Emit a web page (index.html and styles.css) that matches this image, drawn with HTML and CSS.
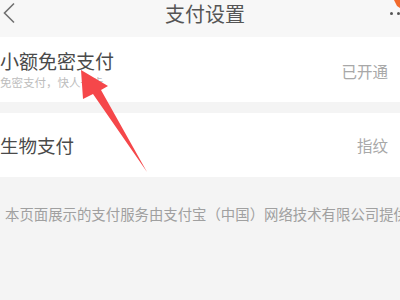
FILE: index.html
```html
<!DOCTYPE html>
<html lang="zh">
<head>
<meta charset="utf-8">
<link rel="stylesheet" href="styles.css">
</head>
<body>
<div class="page">
  <header class="topbar">
    <div class="back">
      <svg width="14" height="22" viewBox="0 0 14 22"><path d="M12 1.5 L2.5 11 L12 20.5" fill="none" stroke="#707070" stroke-width="1.6"/></svg>
    </div>
    <div class="title">支付设置</div>
    <div class="more"><span class="dot"></span><span class="dot"></span></div>
  </header>
  <section class="card card-first">
    <div class="left">
      <div class="label">小额免密支付</div>
      <div class="sub">免密支付，快人一步</div>
    </div>
    <div class="value">已开通</div>
  </section>
  <section class="card card-second">
    <div class="label">生物支付</div>
    <div class="value">指纹</div>
  </section>
  <p class="note">本页面展示的支付服务由支付宝（中国）网络技术有限公司提供</p>
  <svg class="pointer" width="400" height="300" viewBox="0 0 400 300">
    <polygon points="81,70 108,86 101,90 147,172 93,94 83,99" fill="#f5474a"/>
    <polygon points="394,0 400,0 400,8 397,6" fill="#f26a2c"/>
  </svg>
</div>
</body>
</html>
```
FILE: styles.css
```css
* { box-sizing: border-box; margin: 0; padding: 0; }
html, body {
  width: 400px;
  height: 300px;
  overflow: hidden;
  background: #f4f4f4;
  font-family: "Noto Sans CJK SC", "Noto Sans", sans-serif;
}
.page {
  position: relative;
  width: 400px;
  height: 300px;
}
.topbar {
  height: 37px;
  background: #f7f7f7;
  display: grid;
  grid-template-columns: 1fr auto 1fr;
  align-items: start;
}
.back {
  padding: 2px 0 0 2px;
  height: 26px;
}
.title {
  font-size: 20px;
  line-height: 28px;
  color: #555;
  margin-left: 10px;
}
.more {
  display: flex;
  justify-content: flex-end;
  gap: 4px;
  padding-top: 12px;
}
.dot {
  width: 3px;
  height: 3px;
  border-radius: 50%;
  background: #555;
}
.card {
  background: #fff;
  display: flex;
  align-items: center;
  justify-content: space-between;
  padding: 0 12px 0 0;
}
.card-first { height: 65px; }
.card-second { height: 64px; margin-top: 11px; }
.left {
  display: flex;
  flex-direction: column;
  gap: 3px;
}
.label {
  font-size: 19px;
  line-height: 22px;
  color: #4a4a4a;
}
.card-second .label { font-size: 18.5px; }
.sub {
  font-size: 11.5px;
  line-height: 14px;
  color: #bdbdbd;
}
.value {
  font-size: 15.5px;
  color: #a8a8a8;
}
.card-first .value { margin-top: 3px; }
.note {
  margin-top: 28px;
  padding-left: 5px;
  font-size: 14.4px;
  line-height: 18px;
  color: #a0a0a0;
  white-space: nowrap;
}
.pointer {
  position: absolute;
  left: 0;
  top: 0;
  pointer-events: none;
}
```
